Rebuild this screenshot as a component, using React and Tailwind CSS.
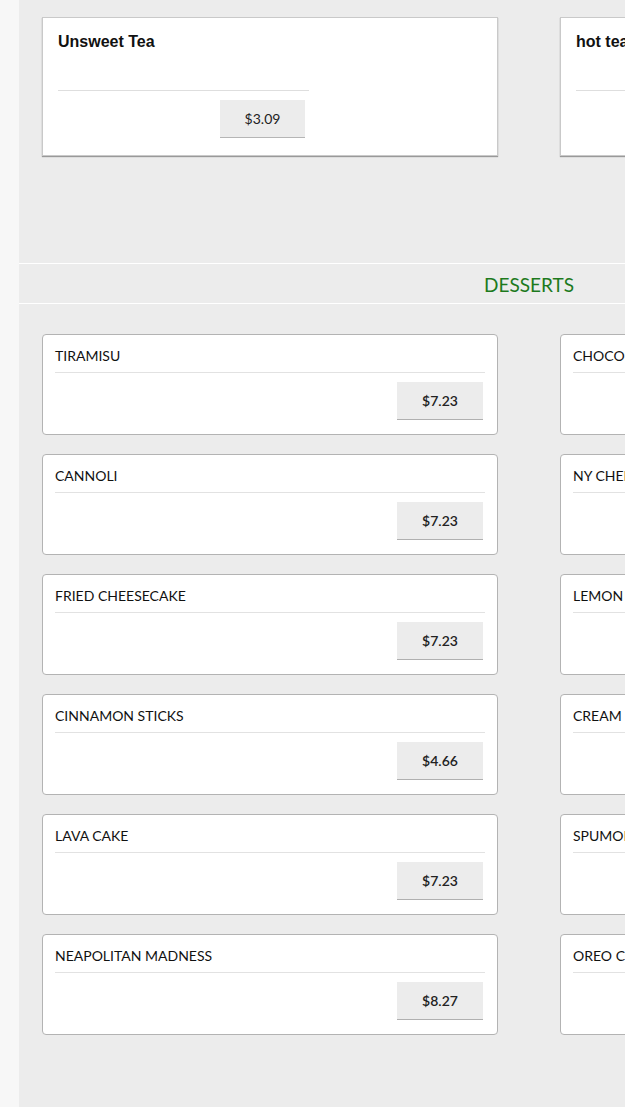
const drinks = [
  { name: "Unsweet Tea", price: "$3.09" },
  { name: "hot tea", price: "$2.49" },
];

const desserts = [
  { name: "TIRAMISU", price: "$7.23" },
  { name: "CHOCOLATE CAKE", price: "$7.23" },
  { name: "CANNOLI", price: "$7.23" },
  { name: "NY CHEESECAKE", price: "$7.23" },
  { name: "FRIED CHEESECAKE", price: "$7.23" },
  { name: "LEMON CAKE", price: "$7.23" },
  { name: "CINNAMON STICKS", price: "$4.66" },
  { name: "CREAM PUFFS", price: "$5.18" },
  { name: "LAVA CAKE", price: "$7.23" },
  { name: "SPUMONI", price: "$5.18" },
  { name: "NEAPOLITAN MADNESS", price: "$8.27" },
  { name: "OREO CHEESECAKE", price: "$7.23" },
];

function DrinkCard({ item }) {
  return (
    <div className="h-[139px] bg-white border border-[#c9c9c9] shadow-[0_1px_1px_rgba(0,0,0,0.35)] px-[15px] pt-[14px]">
      <div className="font-['Liberation_Sans',Arial,sans-serif] font-bold text-[16px] leading-[20px] text-[#111]">
        {item.name}
      </div>
      <div className="w-[251px] h-px bg-[#dedede] mt-[38px]" />
      <div className="ml-[162px] mt-[9px] w-[85px] h-[38px] bg-[#ececec] border-b border-[#b5b5b5] flex items-center justify-center font-['Lato',sans-serif] text-[14px] text-[#222]">
        {item.price}
      </div>
    </div>
  );
}

function DessertCard({ item }) {
  return (
    <div className="h-[101px] bg-white border border-[#b3b3b3] rounded-[4px] px-[12px] pt-[11px] flex flex-col font-['Lato',sans-serif]">
      <div className="text-[14px] leading-[20px] text-[#111] pb-[6px] border-b border-[#e2e2e2]">
        {item.name}
      </div>
      <div className="flex justify-end mt-[9px] pr-[2px]">
        <div className="w-[86px] h-[38px] bg-[#ececec] border-b border-[#b0b0b0] flex items-center justify-center text-[14px] font-semibold text-[#222]">
          {item.price}
        </div>
      </div>
    </div>
  );
}

export default function App() {
  return (
    <div className="w-full h-[1107px] overflow-hidden bg-[#f7f7f7] flex">
      <div className="w-[19px] shrink-0" />
      <div className="w-[1020px] shrink-0 bg-[#ececec]">
        {/* drinks row */}
        <div className="h-[263px] pt-[17px] px-[23px] grid grid-cols-[456px_456px] gap-x-[62px] items-start">
          {drinks.map((d) => (
            <DrinkCard key={d.name} item={d} />
          ))}
        </div>

        {/* section header */}
        <div className="h-[41px] border-y border-white flex items-center justify-center pt-[3px]">
          <span className="font-['Lato',sans-serif] text-[19px] leading-[24px] text-[#1d7a1d]">DESSERTS</span>
        </div>

        {/* desserts */}
        <div className="pt-[30px] px-[23px] grid grid-cols-[456px_456px] gap-x-[62px] gap-y-[19px]">
          {desserts.map((d) => (
            <DessertCard key={d.name} item={d} />
          ))}
        </div>
      </div>
    </div>
  );
}
